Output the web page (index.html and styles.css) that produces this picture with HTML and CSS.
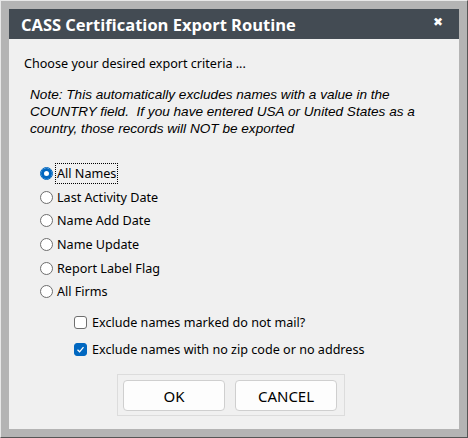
FILE: index.html
```html
<!DOCTYPE html>
<html lang="en">
<head>
    <meta charset="UTF-8">
    <title>CASS Certification Export Routine</title>
    <link rel="stylesheet" href="styles.css">
</head>
<body>
    <div class="window">
        <div class="titlebar">
            <span class="title">CASS Certification Export Routine</span>
            <span class="close">&#x2716;</span>
        </div>
        <div class="content">
            <p class="intro">Choose your desired export criteria ...</p>
            <p class="note">Note: This automatically excludes names with a value in the<br>COUNTRY field.&nbsp; If you have entered USA or United States as a<br>country, those records will NOT be exported</p>

            <div class="options">
                <label class="option"><span class="radio checked"></span><span class="text focus">All Names</span></label>
                <label class="option"><span class="radio"></span><span class="text">Last Activity Date</span></label>
                <label class="option"><span class="radio"></span><span class="text">Name Add Date</span></label>
                <label class="option"><span class="radio"></span><span class="text">Name Update</span></label>
                <label class="option"><span class="radio"></span><span class="text">Report Label Flag</span></label>
                <label class="option"><span class="radio"></span><span class="text">All Firms</span></label>
            </div>

            <div class="checks">
                <label class="check"><span class="box"></span><span class="text">Exclude names marked do not mail?</span></label>
                <label class="check"><span class="box checked">
                    <svg width="9" height="9" viewBox="0 0 9 9"><path d="M1.5 4.8 L3.6 6.8 L7.5 2.2" fill="none" stroke="#fff" stroke-width="1.3"/></svg>
                </span><span class="text">Exclude names with no zip code or no address</span></label>
            </div>

            <div class="buttons">
                <button class="btn">OK</button>
                <button class="btn">CANCEL</button>
            </div>
        </div>
    </div>
</body>
</html>
```

FILE: styles.css
```css
body {
    margin: 0;
    font-family: "Noto Sans", sans-serif;
    color: #000;
}

.window {
    width: 468px;
    height: 438px;
    box-sizing: border-box;
    background-color: #b4b4b4;
    border-style: solid;
    border-width: 1px;
    border-color: #e8e8e8 #555 #555 #e8e8e8;
    padding: 8px;
    display: flex;
    flex-direction: column;
}

.titlebar {
    height: 30px;
    background-color: #434b53;
    color: #fff;
    display: flex;
    align-items: center;
    justify-content: space-between;
    padding: 0 16px 0 12px;
}

.title {
    font-family: "Open Sans", sans-serif;
    font-weight: bold;
    font-size: 16.5px;
}

.close {
    font-size: 12px;
    margin-top: -5px;
}

.content {
    flex: 1;
    background-color: #f0f0f0;
    padding: 15px 0 0 15px;
}

.intro {
    margin: 0;
    font-size: 12.6px;
    line-height: 20px;
}

.note {
    margin: 12px 0 0 6px;
    font-family: "Liberation Sans", Arial, sans-serif;
    font-size: 13.6px;
    font-style: italic;
    line-height: 17px;
}

.options {
    margin: 25px 0 0 16px;
    display: flex;
    flex-direction: column;
}

.option, .check {
    display: flex;
    align-items: center;
    font-size: 12.6px;
    height: 23.6px;
}

.radio {
    width: 11px;
    height: 11px;
    border: 1px solid #6e6e6e;
    border-radius: 50%;
    background-color: #fff;
    margin-right: 4px;
    box-sizing: content-box;
}

.radio.checked {
    border-color: #0067c0;
    background-color: #fff;
    box-shadow: inset 0 0 0 3px #0067c0;
}

.text.focus {
    outline: 1px dotted #000;
    outline-offset: 1px;
}

.checks {
    margin: 7px 0 0 50px;
    display: flex;
    flex-direction: column;
    gap: 3.5px;
}

.box {
    width: 11px;
    height: 11px;
    border: 1px solid #6e6e6e;
    border-radius: 3px;
    background-color: #fff;
    margin-right: 5px;
    display: flex;
    align-items: center;
    justify-content: center;
}

.box.checked {
    background-color: #0067c0;
    border-color: #0067c0;
}

.buttons {
    margin: 13px 0 0 93px;
    width: 216px;
    height: 30px;
    border: 1px solid #dcdcdc;
    padding: 5px;
    display: flex;
    gap: 10px;
}

.btn {
    width: 102px;
    height: 31px;
    background-color: #fdfdfd;
    border: 1px solid #cfcfcf;
    border-radius: 4px;
    font-family: "Noto Sans", sans-serif;
    font-size: 15px;
    color: #000;
    padding: 0;
}
```
